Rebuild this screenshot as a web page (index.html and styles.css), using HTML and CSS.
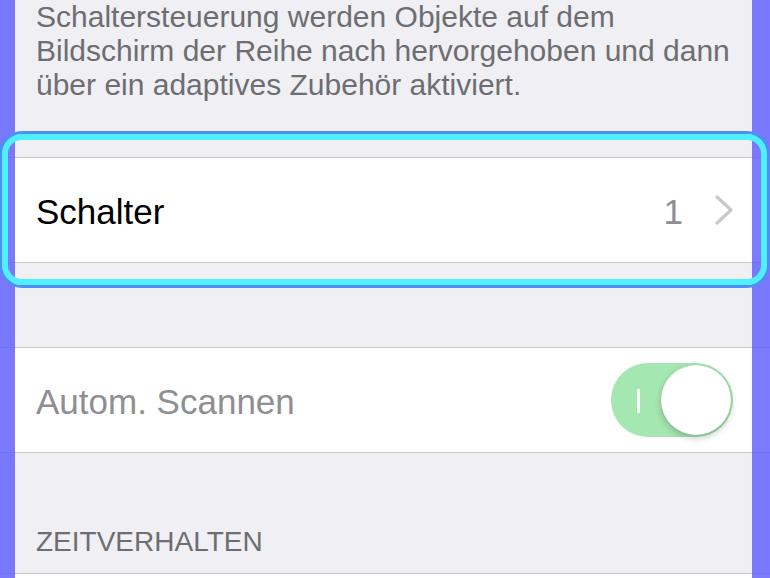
FILE: index.html
```html
<!DOCTYPE html>
<html lang="de">
<head>
  <meta charset="UTF-8">
  <meta name="viewport" content="width=device-width, initial-scale=1.0">
  <title>Schaltersteuerung</title>
  <link rel="stylesheet" href="styles.css">
</head>
<body>
  <div class="screen">
    <p class="group-footer">Schaltersteuerung werden Objekte auf dem<br>Bildschirm der Reihe nach hervorgehoben und dann<br>über ein adaptives Zubehör aktiviert.</p>

    <div class="group group-first">
      <div class="row">
        <span class="row-label">Schalter</span>
        <span class="row-detail">
          <span class="row-value">1</span>
          <svg class="chevron" width="20" height="30" viewBox="0 0 20 30">
            <polyline points="3,2 17,15 3,28" fill="none" stroke="#c7c7cc" stroke-width="3.2" stroke-linecap="round" stroke-linejoin="round"/>
          </svg>
        </span>
      </div>
    </div>

    <div class="group group-second">
      <div class="row">
        <span class="row-label disabled">Autom. Scannen</span>
        <div class="toggle">
          <span class="toggle-mark"></span>
          <span class="toggle-knob"></span>
        </div>
      </div>
    </div>

    <div class="group-header">ZEITVERHALTEN</div>
    <div class="group group-last">
      <div class="row"></div>
    </div>

    <!-- side overlays and scanner highlight lie over the list -->
    <div class="edge edge-left"></div>
    <div class="edge edge-right"></div>
    <div class="scan-ring"></div>
  </div>
</body>
</html>
```

FILE: styles.css
```css
body {
  margin: 0;
  padding: 0;
  font-family: "Liberation Sans", Arial, sans-serif;
  background-color: #efeff4;
  overflow: hidden;
}
.screen {
  position: relative;
  width: 770px;
  height: 578px;
  overflow: hidden;
  background-color: #efeff4;
}
.group-footer {
  margin: 0;
  padding: 0 36px;
  font-size: 30px;
  line-height: 34px;
  color: #6d6d72;
}
.group {
  background: white;
  border-top: 1px solid #c8c7cc;
  border-bottom: 1px solid #c8c7cc;
}
.group-first {
  margin-top: 55px;
}
.group-second {
  margin-top: 84px;
}
.row {
  box-sizing: border-box;
  display: flex;
  align-items: center;
  justify-content: space-between;
  height: 104px;
  padding: 4px 37px 0 36px;
}
.row-label {
  font-size: 35px;
  color: #000;
}
.row-label.disabled {
  color: #8e8e93;
}
.row-detail {
  display: flex;
  align-items: center;
  gap: 31px;
}
.row-value {
  font-size: 35px;
  color: #8e8e93;
}
.chevron {
  display: block;
  margin-top: -4px;
  margin-right: -1px;
}
.toggle {
  position: relative;
  width: 122px;
  height: 74px;
  margin-top: -4px;
  border-radius: 37px;
  background-color: #a5e7b1;
}
.toggle-mark {
  position: absolute;
  left: 26px;
  top: 26px;
  width: 3px;
  height: 24px;
  background: white;
  border-radius: 1px;
}
.toggle-knob {
  position: absolute;
  right: 2px;
  top: 2px;
  width: 70px;
  height: 70px;
  border-radius: 50%;
  background: white;
  box-shadow: 0 3px 7px rgba(0, 0, 0, 0.22), 0 0 1px rgba(0, 0, 0, 0.15);
}
.group-header {
  padding: 72px 36px 14px;
  font-size: 28px;
  line-height: 34px;
  color: #6d6d72;
}
.group-last {
  border-bottom: none;
}
.edge {
  position: absolute;
  top: 0;
  bottom: 0;
  background-color: rgba(95, 94, 255, 0.82);
}
.edge-left {
  left: 0;
  width: 15px;
}
.edge-right {
  right: 0;
  width: 18px;
}
/* scanner highlight */
.scan-ring {
  position: absolute;
  left: 2px;
  top: 134px;
  width: 753px;
  height: 139px;
  border: 6px solid #4ff0fd;
  border-radius: 20px;
  box-shadow: 0 0 0 3px #4d90f4;
}
```
